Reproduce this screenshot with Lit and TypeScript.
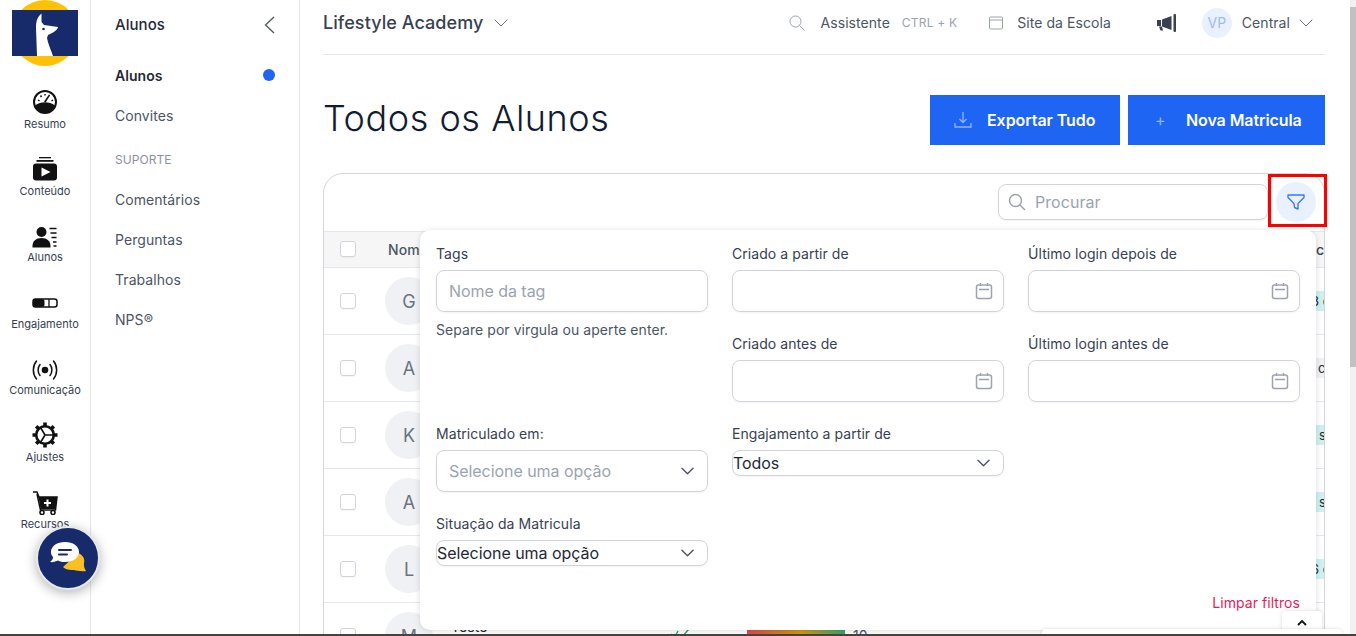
import { LitElement, html, css, svg } from "lit";
import { customElement } from "lit/decorators.js";

const I = (w: number, h: number, vb: string, body: unknown) =>
  html`<svg width=${w} height=${h} viewBox=${vb} style="display:block">${body}</svg>`;

const navIcons = {
  gauge: I(26, 26, "0 0 26 26", svg`<circle cx="13" cy="13" r="11" fill="#fff" stroke="#111" stroke-width="2"/><path d="M3 16.500c3-2.500 6.500-3.300 10-3.300s7 .8 10 3.300c-1.500 4.800-5.200 7.500-10 7.500s-8.500-2.700-10-7.500z" fill="#111"/><path d="M12 12.500l5-7 1.200 .8-4.600 7.300z" fill="#111"/><path d="M6 11l1.500 1M8.500 6.500l1 1.500M13 5v1.500M21 11l-1.500 1" stroke="#111" stroke-width="1.500"/>`),
  content: I(26, 26, "0 0 26 26", svg`<rect x="7" y="1" width="12" height="1.300" fill="#111"/><rect x="4.500" y="4" width="17" height="1.800" fill="#111"/><rect x="1" y="7.500" width="24" height="17" rx="3" fill="#111"/><path d="M9.500 11.500l9 4.500-9 4.500z" fill="#fff"/>`),
  students: I(26, 22, "0 0 26 22", svg`<circle cx="9.500" cy="6" r="5" fill="#111"/><path d="M0.500 20c0-5 3.500-8 9-8s9 3 9 8v1.500h-18z" fill="#111"/><path d="M17.500 2.500h7M18.500 7h6M19.500 11.500h5M21 16h3.500M21.500 20h3" stroke="#111" stroke-width="1.600"/>`),
  engage: I(26, 10, "0 0 26 10", svg`<rect x="1" y="1" width="24" height="8" rx="2.500" fill="#fff" stroke="#111" stroke-width="1.500"/><rect x="1" y="1" width="11.500" height="8" rx="2.500" fill="#111"/><path d="M17 1v8" stroke="#111" stroke-width="1.300"/>`),
  comm: I(26, 22, "0 0 26 22", svg`<circle cx="13" cy="11" r="3.300" fill="#111"/><path d="M8 5.500c-2.500 3-2.500 8 0 11M18 5.500c2.500 3 2.500 8 0 11M4.500 2c-4.200 5-4.200 13 0 18M21.500 2c4.200 5 4.200 13 0 18" fill="none" stroke="#111" stroke-width="1.500" stroke-linecap="round"/>`),
  gear: I(26, 26, "0 0 26 26", svg`<path d="M13 .5v5M13 20.500v5M.5 13h5M20.500 13h5M4.200 4.200l3.500 3.500M18.300 18.300l3.500 3.500M4.200 21.800l3.500-3.500M18.300 7.700l3.500-3.500" stroke="#111" stroke-width="3.600"/><circle cx="13" cy="13" r="8.800" fill="#fff" stroke="#111" stroke-width="2.600"/><path d="M13 13h8M13 13l-4.500-7.500M13 13l-4.500 7.500" stroke="#111" stroke-width="1.600" fill="none"/>`),
  cart: I(26, 24, "0 0 26 24", svg`<path d="M1 1h4l2 5h18l-1.500 13H8.500L5 3" fill="none" stroke="#111" stroke-width="1.500"/><path d="M6.500 6H25l-1.500 12H8.500z" fill="#111"/><path d="M15.500 8.500v7M12 12h7" stroke="#fff" stroke-width="2"/><circle cx="10" cy="21.500" r="2" fill="#fff" stroke="#111" stroke-width="1.600"/><circle cx="21" cy="21.500" r="2" fill="#fff" stroke="#111" stroke-width="1.600"/>`),
};

const chevron = (w = 14, c = "#4b5563", sw = 1.5) =>
  I(w, Math.round(w * 0.6), "0 0 14 8", svg`<path d="M1 1l6 6 6-6" fill="none" stroke=${c} stroke-width=${sw} stroke-linecap="round" stroke-linejoin="round"/>`);

const calendar = I(18, 18, "0 0 18 18", svg`<rect x="1.500" y="3" width="15" height="13.500" rx="2" fill="none" stroke="#9ca3af" stroke-width="1.500"/><path d="M5.500 1v3M12.500 1v3" stroke="#9ca3af" stroke-width="1.400"/><path d="M4 7.500h10" stroke="#9ca3af" stroke-width="1.500"/>`);

type Row = { l: string; b: string; t: string; x: number };
const rows: Row[] = [
  { l: "G", b: "#cff0f1", t: "3 d", x: -5 },
  { l: "A", b: "#f1f1f3", t: "c", x: 2 },
  { l: "K", b: "#cff0f1", t: "s", x: 3 },
  { l: "A", b: "#cff0f1", t: "s", x: 3 },
  { l: "L", b: "#cff0f1", t: "6 c", x: -5 },
  { l: "M", b: "transparent", t: "", x: 0 },
];

@customElement("app-root")
export class AppRoot extends LitElement {
  static styles = css`
    :host { display: block; height: 636px; overflow: hidden; font-family: Inter, "Liberation Sans", sans-serif; color: #374151; background: #fff; position: relative; letter-spacing: .06px; }
    * { box-sizing: border-box; }
    .page { display: flex; height: 636px; overflow: hidden; }
    .rail { width: 91px; flex: none; border-right: 1px solid #e5e7eb; display: flex; flex-direction: column; align-items: center; }
    .logo { width: 90px; height: 66px; margin-bottom: 9px; flex: none; }
    .nav { height: 66.6px; flex: none; display: flex; flex-direction: column; align-items: center; justify-content: flex-end; padding-bottom: 10.500px; font: 400 11px/14px Inter, sans-serif; letter-spacing: 0; color: #374151; gap: 2px; }
    .nav:first-of-type { height: 44px; }
    .side { width: 209px; flex: none; border-right: 1px solid #e5e7eb; padding: 0 24px; }
    .side-h { height: 55px; display: flex; align-items: center; justify-content: space-between; font-size: 15px; font-weight: 500; color: #1f2937; padding-bottom: 6px; }
    .side-i { height: 40px; display: flex; align-items: center; justify-content: space-between; font-size: 14px; color: #4b5563; }
    .side-i.on { font-weight: 600; color: #1f2937; }
    .side-c { height: 44px; padding-top: 5px; display: flex; align-items: center; font-size: 12px; color: #8b919c; }
    .dot { width: 12px; height: 12px; border-radius: 50%; background: #1d65f2; }
    .main { flex: 1; padding-left: 23px; min-width: 0; }
    .top { height: 55px; border-bottom: 1px solid #e5e7eb; display: flex; align-items: center; font-size: 14px; color: #4b5563; padding-bottom: 9px; width: 1002px; }
    .brand { font-size: 18px; font-weight: 500; color: #374151; margin-right: 11px; }
    .grow { flex: 1; }
    .key { font-size: 12px; color: #9ca3af; margin-left: 12px; margin-right: 32px; letter-spacing: .2px; }
    .ico { margin-right: 16px; }
    .ico.w { margin-right: 14px; }
    .mega { margin-left: 45px; }
    .ch-end { margin: 0 12px 0 9px; }
    .avatar { width: 30px; height: 30px; border-radius: 50%; background: #e9f0fe; color: #9dbcf9; font-size: 14px; display: flex; align-items: center; justify-content: center; margin: 0 10px 0 24px; }
    .head { height: 118px; display: flex; align-items: center; width: 1002px; gap: 8px; padding-top: 11px; }
    h1 { margin: 0; padding-bottom: 4px; font: 300 36px/44px Inter, sans-serif; color: #111c33; flex: 1; letter-spacing: .55px; }
    .btn { height: 50px; background: #1d65f2; color: #fff; display: flex; align-items: center; font-size: 16px; font-weight: 600; padding-left: 24px; letter-spacing: -.08px; }
    .btn.a { width: 190px; gap: 15px; }
    .btn.b { width: 197px; gap: 20px; padding-left: 27px; }
    .btn .plus { color: #8fb4f8; font-weight: 400; font-size: 16px; width: 11px; }
    .card { width: 1002px; height: 600px; border: 1px solid #d5d6dd; border-radius: 20px; overflow: hidden; }
    .tools { height: 57px; display: flex; align-items: center; justify-content: flex-end; padding-bottom: 2px; }
    .search { width: 270px; height: 36px; border: 1px solid #d1d5db; border-radius: 8px; display: flex; align-items: center; gap: 9px; padding-left: 9px; font-size: 16px; color: #9ca3af; box-shadow: 0 1px 2px rgba(0,0,0,.05); }
    .fbtn { width: 40px; height: 40px; border-radius: 50%; background: #e9f0fe; margin: 0 8px; display: flex; align-items: center; justify-content: center; }
    .thead { height: 37px; background: #f6f6f7; border-top: 1px solid #e5e7eb; border-bottom: 1px solid #e5e7eb; display: flex; align-items: center; padding: 0 0 1px 16px; font-size: 14px; font-weight: 500; color: #4b5563; position: relative; }
    .cb { width: 16px; height: 16px; border: 1px solid #d1d5db; border-radius: 3px; background: #fff; flex: none; box-shadow: 0 1px 1px rgba(0,0,0,.04); }
    .thead .cb { margin-right: 32px; }
    .tr { height: 67px; border-bottom: 1px solid #e5e7eb; display: flex; align-items: center; padding-left: 16px; position: relative; }
    .av { width: 48px; height: 48px; border-radius: 50%; background: #f0f1f4; color: #6b7280; font-size: 18px; display: flex; align-items: center; justify-content: center; margin-left: 29px; flex: none; }
    .stub { position: absolute; right: 0; width: 8px; height: 20px; overflow: hidden; font-size: 13px; line-height: 20px; color: #1f2937; white-space: nowrap; }
    .hstub { position: absolute; right: 0; width: 8px; overflow: hidden; font-size: 14px; color: #374151; text-align: right; }
    .bar { width: 6px; flex: none; background: #f1f1f1; margin-left: 25px; position: relative; }
    .thumb { height: 360px; margin-top: 7px; background: #c1c1c1; }
    .panel { position: absolute; left: 420px; top: 230px; width: 896px; height: 400px; background: #fff; border-radius: 10px; box-shadow: 0 1px 6px rgba(0,0,0,.14); padding: 16px; display: grid; grid-template-columns: repeat(3, 272px); grid-auto-rows: 90px; column-gap: 24px; }
    .f { display: flex; flex-direction: column; }
    .f label { font-size: 14px; line-height: 16px; color: #374151; margin-bottom: 8px; }
    .inp { height: 42px; border: 1px solid #d1d5db; border-radius: 8px; display: flex; align-items: center; justify-content: space-between; padding: 0 10px 0 12px; font-size: 16px; color: #9ca3af; box-shadow: 0 1px 2px rgba(0,0,0,.05); flex: none; letter-spacing: -.05px; }
    .inp.sel { padding-right: 13px; }
    .inp.thin { height: 26px; padding: 0 13px 0 0; color: #1f2937; font-size: 16px; }
    .help { font-size: 14px; color: #4b5563; margin-top: 9px; line-height: 18px; }
    .span2 { grid-row: span 2; }
    .c1 { grid-column: 1; }
    .c2 { grid-column: 2; }
    .c3 { grid-column: 3; }
    .clear { position: absolute; right: 16px; bottom: 19px; font-size: 14px; line-height: 17px; color: #e11d5b; }
    .red { position: absolute; left: 1268px; top: 174px; width: 59px; height: 53px; border: 3px solid #f00; }
    .chat { position: absolute; left: 36px; top: 526px; width: 64px; height: 64px; border-radius: 50%; background: #172b6b; border: 2px solid #e8e9ec; box-shadow: 0 3px 12px rgba(0,0,0,.3); display: flex; align-items: center; justify-content: center; }
    .up { position: absolute; left: 1282px; top: 611px; width: 40px; height: 25px; background: #fff; border-radius: 4px 4px 0 0; box-shadow: 0 0 4px rgba(0,0,0,.15); display: flex; justify-content: center; padding-top: 8px; }
    .tray { position: absolute; left: 1042px; top: 629px; width: 300px; height: 7px; background: #fff; border-radius: 4px 4px 0 0; box-shadow: 0 0 4px rgba(0,0,0,.15); }
    .edge { position: absolute; left: 0; right: 0; bottom: 0; height: 2px; background: #45423f; }
    .teste { position: absolute; left: 127px; top: 15px; font-size: 14px; color: #1f2937; }
    .check { position: absolute; left: 346px; top: 23px; }
    .grad { position: absolute; left: 423px; top: 27px; width: 98px; height: 8px; background: linear-gradient(90deg, #dc4a4a, #d4980a 55%, #35a86b); }
    .ten { position: absolute; left: 529px; top: 24px; font-size: 14px; color: #4b5563; }
  `;

  render() {
    return html`
      <div class="page">
        <aside class="rail">
          <div class="logo">
            ${I(90, 66, "0 0 90 66", svg`<circle cx="45" cy="33" r="33" fill="#ffc107"/><rect x="12" y="10" width="66" height="46" fill="#172b6b"/><path d="M37 56L36 28C36 22 37 17 41.500 13.500L41.500 22L44 25L58 27C57 31 52 33 48 35L47 38C48 44 51 50 53 56Z" fill="#fff"/><circle cx="43.500" cy="29" r="1.300" fill="#172b6b"/>`)}
          </div>
          <div class="nav">${navIcons.gauge}<span>Resumo</span></div>
          <div class="nav">${navIcons.content}<span>Conteúdo</span></div>
          <div class="nav">${navIcons.students}<span>Alunos</span></div>
          <div class="nav"><span style="margin-bottom:7px">${navIcons.engage}</span><span>Engajamento</span></div>
          <div class="nav">${navIcons.comm}<span>Comunicação</span></div>
          <div class="nav">${navIcons.gear}<span>Ajustes</span></div>
          <div class="nav">${navIcons.cart}<span>Recursos</span></div>
        </aside>
        <nav class="side">
          <div class="side-h"><span>Alunos</span>${I(11, 20, "0 0 11 20", svg`<path d="M10 2L1.500 10l8.500 8" fill="none" stroke="#4b5563" stroke-width="1.300"/>`)}</div>
          <div class="side-i on"><span>Alunos</span><span class="dot"></span></div>
          <div class="side-i"><span>Convites</span></div>
          <div class="side-c">SUPORTE</div>
          <div class="side-i"><span>Comentários</span></div>
          <div class="side-i"><span>Perguntas</span></div>
          <div class="side-i"><span>Trabalhos</span></div>
          <div class="side-i"><span>NPS®</span></div>
        </nav>
        <main class="main">
          <div class="top">
            <span class="brand">Lifestyle Academy</span>${chevron(14, "#6b7280", 1)}
            <span class="grow"></span>
            <span class="ico">${I(16, 16, "0 0 16 16", svg`<circle cx="6.500" cy="6.500" r="5.500" fill="none" stroke="#9ca3af" stroke-width="1"/><path d="M10.500 10.500l5 5" stroke="#9ca3af" stroke-width="1"/>`)}</span>
            <span>Assistente</span><span class="key">CTRL + K</span>
            <span class="ico w">${I(14, 14, "0 0 14 14", svg`<rect x=".5" y="1" width="13" height="12" rx="1" fill="none" stroke="#9ca3af"/><path d="M.5 4h13" stroke="#9ca3af"/>`)}</span>
            <span>Site da Escola</span>
            <span class="mega">${I(22, 18, "0 0 22 18", svg`<path d="M1 6h4v6H1zM6 5.500L15.500 2v14L6 12.500z" fill="#374151"/><rect x="17.500" y="0" width="2.500" height="18" rx="1" fill="#374151"/><path d="M3 12.500h3l1 4H4.500z" fill="#374151"/>`)}</span>
            <span class="avatar">VP</span>
            <span>Central</span>
            <span class="ch-end">${chevron(14, "#6b7280", 1)}</span>
          </div>
          <div class="head">
            <h1>Todos os Alunos</h1>
            <div class="btn a">${I(18, 18, "0 0 18 18", svg`<path d="M9 1v10M5.500 8L9 11.500 12.500 8M1 12v4h16v-4" fill="none" stroke="#8fb4f8" stroke-width="1.300"/>`)}<span>Exportar Tudo</span></div>
            <div class="btn b"><span class="plus">+</span><span>Nova Matricula</span></div>
          </div>
          <section class="card">
            <div class="tools">
              <div class="search">${I(18, 18, "0 0 18 18", svg`<circle cx="7.500" cy="7.500" r="6" fill="none" stroke="#9ca3af" stroke-width="1.500"/><path d="M12 12l5 5" stroke="#9ca3af" stroke-width="1.500"/>`)}<span>Procurar</span></div>
              <div class="fbtn">${I(18, 18, "0 0 18 18", svg`<path d="M1 2h16v2.500L11 10.500V16l-3.500-1.500-.5-4L1 4.500z" fill="none" stroke="#3b7af5" stroke-width="1.400" stroke-linejoin="round"/>`)}</div>
            </div>
            <div class="thead"><span class="cb"></span><span>Nome</span><span class="hstub">c</span></div>
            ${rows.map((r, i) => html`
              <div class="tr">
                <span class="cb"></span><span class="av">${r.l}</span>
                ${r.t ? html`<span class="stub" style="background:${r.b};text-indent:${r.x}px">${r.t}</span>` : ""}
                ${i === 5 ? html`<span class="teste">Teste</span><span class="check">${I(24, 12, "0 0 24 12", svg`<path d="M1 8l3 4 4-7M9 10l2 2 8-9" fill="none" stroke="#22a860" stroke-width="1.400"/>`)}</span><span class="grad"></span><span class="ten">10</span>` : ""}
              </div>`)}
          </section>
        </main>
        <div class="bar"><div class="thumb"></div></div>
      </div>

      <div class="panel">
        <div class="f c1 span2"><label>Tags</label><div class="inp">Nome da tag</div><div class="help">Separe por virgula ou aperte enter.</div></div>
        <div class="f c2"><label>Criado a partir de</label><div class="inp"><span></span>${calendar}</div></div>
        <div class="f c3"><label>Último login depois de</label><div class="inp"><span></span>${calendar}</div></div>
        <div class="f c2"><label>Criado antes de</label><div class="inp"><span></span>${calendar}</div></div>
        <div class="f c3"><label>Último login antes de</label><div class="inp"><span></span>${calendar}</div></div>
        <div class="f c1"><label>Matriculado em:</label><div class="inp sel"><span>Selecione uma opção</span>${chevron(13)}</div></div>
        <div class="f c2"><label>Engajamento a partir de</label><div class="inp thin"><span>Todos</span>${chevron(13)}</div></div>
        <div class="f c1"><label>Situação da Matricula</label><div class="inp thin"><span>Selecione uma opção</span>${chevron(13)}</div></div>
        <span class="clear">Limpar filtros</span>
      </div>

      <div class="red"></div>
      <div class="up">${I(12, 7, "0 0 12 7", svg`<path d="M2 6l4-4 4 4" fill="none" stroke="#111" stroke-width="1.800"/>`)}</div>
      <div class="tray"></div>
      <div class="edge"></div>
      <div class="chat">${I(36, 34, "0 0 36 34", svg`<path d="M28 12c5 2 7 6 6 10-.3 2 0 5 2 8-4 .5-9 0-12-1-5 .5-9-1-11-3z" fill="#fbbf24"/><path d="M15 1c8 0 14 4 14 10s-6 10-14 10c-3 0-5-.5-7-1.500-2 1-5 2-8 1.500 2-1.500 3-3 3-5-1.500-1.500-2-3-2-5C1 5 7 1 15 1z" fill="#fff"/><path d="M9 9h12M9 13.500h8" stroke="#172b6b" stroke-width="2" stroke-linecap="round"/>`)}</div>
    `;
  }
}
